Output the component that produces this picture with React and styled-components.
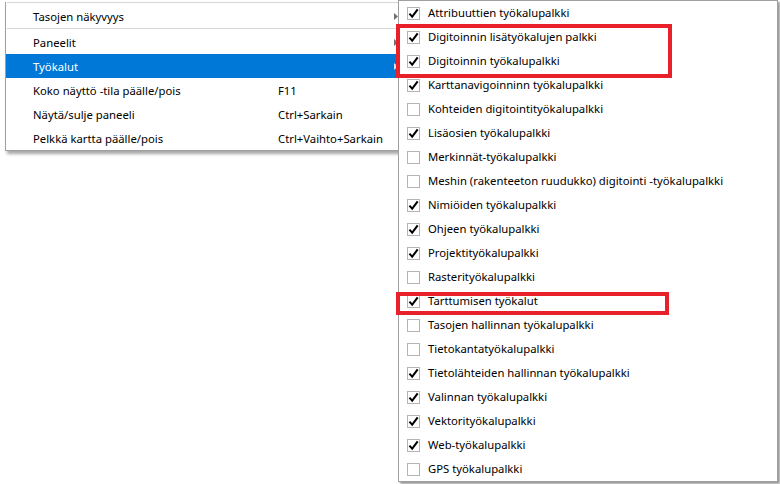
import React from 'react'
import styled, { createGlobalStyle } from 'styled-components'

const GlobalStyle = createGlobalStyle`
    html, body {
        margin: 0;
        padding: 0;
        background: #ffffff;
    }
    body {
        font-family: "Noto Sans", "Open Sans", sans-serif;
        font-size: 11.3px;
        color: #000;
    }
`

const mainItems = [
    { sep: true },
    { label: 'Tasojen näkyvyys', sub: true },
    { sep: true },
    { label: 'Paneelit', sub: true },
    { label: 'Työkalut', sub: true, active: true },
    { label: 'Koko näyttö -tila päälle/pois', key: 'F11' },
    { label: 'Näytä/sulje paneeli', key: 'Ctrl+Sarkain' },
    { label: 'Pelkkä kartta päälle/pois', key: 'Ctrl+Vaihto+Sarkain' },
]

const toolbars = [
    ['Attribuuttien työkalupalkki', true],
    ['Digitoinnin lisätyökalujen palkki', true],
    ['Digitoinnin työkalupalkki', true],
    ['Karttanavigoinninn työkalupalkki', true],
    ['Kohteiden digitointityökalupalkki', false],
    ['Lisäosien työkalupalkki', true],
    ['Merkinnät-työkalupalkki', false],
    ['Meshin (rakenteeton ruudukko) digitointi -työkalupalkki', false],
    ['Nimiöiden työkalupalkki', true],
    ['Ohjeen työkalupalkki', true],
    ['Projektityökalupalkki', true],
    ['Rasterityökalupalkki', false],
    ['Tarttumisen työkalut', true],
    ['Tasojen hallinnan työkalupalkki', false],
    ['Tietokantatyökalupalkki', false],
    ['Tietolähteiden hallinnan työkalupalkki', true],
    ['Valinnan työkalupalkki', true],
    ['Vektorityökalupalkki', true],
    ['Web-työkalupalkki', true],
    ['GPS työkalupalkki', false],
]

const Arrow = ({ light }) => (
    <svg width="4" height="7" viewBox="0 0 4 7">
        <path d="M0 0 L4 3.5 L0 7 Z" fill={light ? '#cfe3f7' : '#707070'} />
    </svg>
)

const Check = () => (
    <svg width="11" height="11" viewBox="0 0 11 11">
        <path d="M1.4 5.6 L4.2 8.7 L9.7 1.4" fill="none" stroke="#000" strokeWidth="2" strokeLinejoin="miter" />
    </svg>
)

const App = () => {
    return (
        <Desktop>
            <GlobalStyle />
            <MainMenu>
                {mainItems.map((item, index) => {
                    if (item.sep) return <Separator key={index} />
                    return (
                        <MenuRow key={index} $active={item.active}>
                            <span>{item.label}</span>
                            <span>{item.key}</span>
                            <ArrowCell>{item.sub && <Arrow light={item.active} />}</ArrowCell>
                        </MenuRow>
                    )
                })}
            </MainMenu>

            <SubMenu>
                {toolbars.map(([label, checked], index) => (
                    <CheckRow key={index}>
                        <Box>{checked && <Check />}</Box>
                        <Label>{label}</Label>
                    </CheckRow>
                ))}
                <Marker $top={23} $width={276} $height={54} $thick={4} />
                <Marker $top={291} $width={273} $height={23} $thick={4} />
            </SubMenu>
        </Desktop>
    )
}

const Desktop = styled.div`
    position: relative;
    width: 780px;
    height: 484px;
    overflow: hidden;
    background: #ffffff;
`

const MainMenu = styled.div`
    position: absolute;
    left: 5px;
    top: 2px;
    width: 400px;
    display: flex;
    flex-direction: column;
    background: #ffffff;
    border: 1px solid #a0a0a0;
    border-top: none;
    box-shadow: 2px 3px 3px rgba(0, 0, 0, 0.35);
`

const Separator = styled.div`
    height: 2px;
    margin: 0 4px 0 1px;
    border-top: 1px solid #d7d7d7;
    box-sizing: border-box;
`

const MenuRow = styled.div`
    height: 24px;
    display: grid;
    grid-template-columns: 245px 1fr 12px;
    align-items: center;
    padding-left: 27px;
    background: ${p => (p.$active ? '#0078d7' : 'transparent')};
    color: ${p => (p.$active ? '#ffffff' : '#000000')};
    white-space: nowrap;
`

const ArrowCell = styled.span`
    display: flex;
    align-items: center;
    justify-content: flex-start;
`

const SubMenu = styled.div`
    position: absolute;
    left: 398px;
    top: 0;
    width: 378px;
    display: flex;
    flex-direction: column;
    background: #ffffff;
    border: 1px solid #a0a0a0;
    box-shadow: 2px 2px 2px rgba(0, 0, 0, 0.4);
    z-index: 2;
`

const CheckRow = styled.div`
    height: 24px;
    display: flex;
    align-items: center;
    gap: 8px;
    padding-left: 8px;
    white-space: nowrap;
`

const Label = styled.span`
    position: relative;
    top: -1px;
`

const Box = styled.span`
    width: 13px;
    height: 13px;
    box-sizing: border-box;
    border: 1px solid #b4b4b4;
    background: #ffffff;
    display: flex;
    align-items: center;
    justify-content: center;
`

const Marker = styled.div`
    position: absolute;
    left: -3px;
    top: ${p => p.$top}px;
    width: ${p => p.$width}px;
    height: ${p => p.$height}px;
    box-sizing: border-box;
    border: ${p => p.$thick}px solid #e8202a;
    pointer-events: none;
`

export default App
